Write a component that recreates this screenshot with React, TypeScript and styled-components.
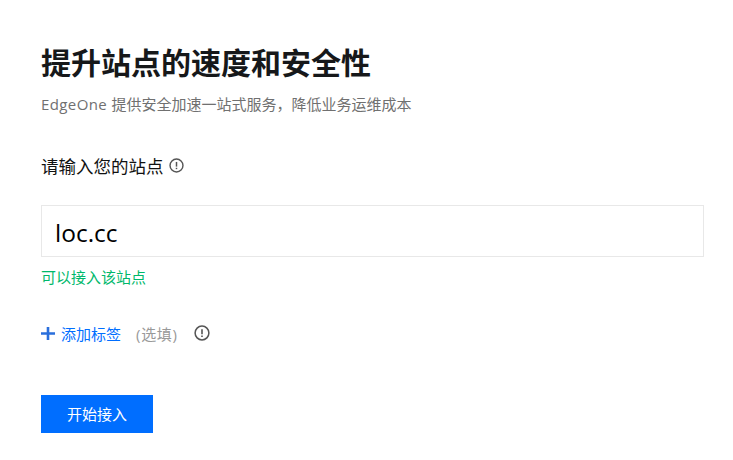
import React from "react";
import styled, { createGlobalStyle } from "styled-components";

const Global = createGlobalStyle`
  html, body { margin: 0; padding: 0; background: #fff; }
  body { font-family: "Open Sans", "Noto Sans CJK SC", sans-serif; }
`;

const Page = styled.main`
  width: 733px;
  height: 460px;
  box-sizing: border-box;
  padding: 42px 29px 0 41px;
  overflow: hidden;
  display: flex;
  flex-direction: column;
`;

const Title = styled.h1`
  margin: 0;
  font-size: 30px;
  line-height: 42px;
  font-weight: 700;
  color: #16181a;
`;

const Subtitle = styled.p`
  margin: 9px 0 0;
  font-size: 15px;
  line-height: 22px;
  color: #707070;
`;

const Brand = styled.span`
  letter-spacing: 0.4px;
`;

const FieldLabel = styled.div`
  margin-top: 38px;
  display: flex;
  align-items: center;
  gap: 5px;
  height: 24px;
  font-size: 17.5px;
  color: #111;
`;

const SiteInput = styled.input`
  margin-top: 28px;
  height: 52px;
  width: 100%;
  box-sizing: border-box;
  padding: 2px 13px 0;
  border: 1px solid #e8e8e8;
  outline: none;
  font-family: inherit;
  font-size: 24.5px;
  color: #000;
  background: #fff;
`;

const Hint = styled.div`
  margin-top: 10px;
  font-size: 15px;
  line-height: 20px;
  color: #00b86b;
`;

const TagRow = styled.div`
  margin-top: 35px;
  display: flex;
  align-items: center;
  height: 22px;
  font-size: 15px;
`;

const AddTag = styled.span`
  display: flex;
  align-items: center;
  gap: 6px;
  color: #006eff;
`;

const Optional = styled.span`
  margin-left: 15px;
  letter-spacing: 0.7px;
  color: #999;
`;

const InfoWrap = styled.span`
  display: inline-flex;
  margin-left: 16px;
`;

const StartButton = styled.button`
  margin-top: 51px;
  width: 112px;
  height: 38px;
  border: none;
  padding: 0 0 2px;
  background: #006eff;
  color: #fff;
  font-family: inherit;
  font-size: 15px;
`;

const InfoIcon = ({ size }: { size: number }) => (
  <svg width={size} height={size} viewBox="0 0 16 16" fill="none" aria-hidden="true">
    <circle cx="8" cy="8" r="6.9" stroke="#555" strokeWidth="1.5" />
    <path d="M8 4.2v5" stroke="#555" strokeWidth="1.6" />
    <path d="M8 10.4v1.5" stroke="#555" strokeWidth="1.6" />
  </svg>
);

const PlusIcon = () => (
  <svg width="14" height="13" viewBox="0 0 14 13" aria-hidden="true">
    <path d="M7 0v13M0 6.5h14" stroke="#2a6fdc" strokeWidth="2.6" />
  </svg>
);

export default function App() {
  return (
    <>
      <Global />
      <Page>
        <Title>提升站点的速度和安全性</Title>
        <Subtitle>
          <Brand>EdgeOne </Brand>提供安全加速一站式服务，降低业务运维成本
        </Subtitle>
        <FieldLabel>
          请输入您的站点
          <InfoIcon size={15} />
        </FieldLabel>
        <SiteInput defaultValue="loc.cc" />
        <Hint>可以接入该站点</Hint>
        <TagRow>
          <AddTag>
            <PlusIcon />
            添加标签
          </AddTag>
          <Optional>(选填)</Optional>
          <InfoWrap>
            <InfoIcon size={16} />
          </InfoWrap>
        </TagRow>
        <StartButton>开始接入</StartButton>
      </Page>
    </>
  );
}
